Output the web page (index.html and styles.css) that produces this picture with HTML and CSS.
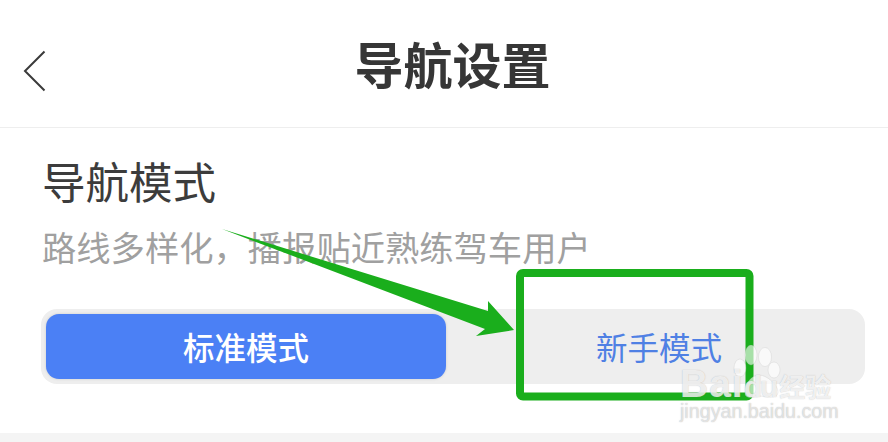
FILE: index.html
```html
<!DOCTYPE html>
<html lang="zh-CN">
<head>
<meta charset="utf-8">
<title>导航设置</title>
<link rel="stylesheet" href="styles.css">
</head>
<body>
<div class="page">
  <header class="topbar">
    <svg class="back" width="24" height="42" viewBox="0 0 24 42"><path d="M21.5 1.5 2 21 21.5 40.500" fill="none" stroke="#3a3a3a" stroke-width="2"/></svg>
    <h1 class="title">导航设置</h1>
  </header>
  <section class="mode">
    <h2 class="mode-title">导航模式</h2>
    <p class="mode-desc">路线多样化，播报贴近熟练驾车用户</p>
    <div class="segment">
      <div class="seg-item seg-active">标准模式</div>
      <div class="seg-item seg-idle">新手模式</div>
    </div>
  </section>
  <div class="band"></div>

  <svg class="annotation" width="888" height="442" viewBox="0 0 888 442">
    <polygon points="222,229 488,311 488,301 514,330 476,336 485,329" fill="#1aae1c"/>
    <rect x="520" y="273" width="229.500" height="123.500" rx="3" fill="none" stroke="#1aae1c" stroke-width="8"/>
  </svg>

  <div class="watermark">
    <svg class="paw" width="56" height="60" viewBox="0 0 56 60">
      <g fill="#fff" fill-opacity=".62" stroke="#bbb" stroke-opacity=".35" stroke-width=".7">
        <ellipse cx="8" cy="23" rx="6" ry="9"/>
        <ellipse cx="19" cy="10" rx="6" ry="10"/>
        <ellipse cx="33" cy="12" rx="6.500" ry="9.500"/>
        <ellipse cx="42" cy="25" rx="6" ry="8"/>
        <path d="M13 48C13 38 20 30 27 30C35 30 46 40 46 47C46 53 38 53 29 51C21 53 13 54 13 48Z"/>
      </g>
    </svg>
    <div class="wm-brand"><span class="wm-bai">Bai</span><span class="wm-du">du</span><span class="wm-jy">经验</span></div>
    <div class="wm-url">jingyan.baidu.com</div>
  </div>
</div>
</body>
</html>
```
FILE: styles.css
```css
* { box-sizing: border-box; }
html, body { margin: 0; padding: 0; background: #fff; }
body { font-family: "Noto Sans CJK SC", "Noto Sans", sans-serif; }
.page { position: relative; width: 888px; height: 442px; overflow: hidden; display: flex; flex-direction: column; background: #fff; }
.topbar { height: 128px; flex: none; display: flex; align-items: center; justify-content: center; position: relative; border-bottom: 1px solid #eeeeee; padding: 0 0 2px 17px; }
.back { position: absolute; left: 23px; top: 50px; }
.title { margin: 0; font-size: 49px; line-height: 60px; font-weight: 700; color: #363636; }
.mode { flex: 1; padding: 23px 23px 0 41px; }
.mode-title { margin: 0 0 0 1px; font-size: 43.500px; line-height: 60px; font-weight: 400; color: #3c3c3c; }
.mode-desc { margin: 10px 0 0 1px; font-size: 34.300px; line-height: 50px; color: #a0a0a0; white-space: nowrap; }
.segment { margin-top: 38px; height: 75px; padding: 5px; border-radius: 16px; background: #eeeeee; display: flex; }
.seg-item { display: flex; align-items: center; justify-content: center; font-size: 31.500px; padding-bottom: 2px; }
.seg-active { width: 400px; background: #4b80f5; color: #fff; border-radius: 13px; font-weight: 500; box-shadow: 0 0 3px rgba(0,0,0,.14); }
.seg-idle { flex: 1; color: #4f80e4; padding-left: 12px; }
.band { height: 9px; flex: none; background: #f4f4f4; }
.annotation { position: absolute; left: 0; top: 0; }
.watermark { position: absolute; left: 680px; top: 345px; width: 170px; height: 80px; color: #fff; }
.paw { position: absolute; left: 52px; top: 0; }
.wm-brand { position: absolute; left: 0; top: 23px; display: flex; align-items: baseline; white-space: nowrap; line-height: 31px; }
.wm-bai, .wm-du { font-family: "Liberation Sans", sans-serif; font-weight: 700; color: rgba(255,255,255,.75); text-shadow: 0 0 1px rgba(120,120,120,.5); }
.wm-bai { font-size: 39px; letter-spacing: 1px; }
.wm-du { font-size: 30px; letter-spacing: -2px; }
.wm-jy { margin-left: 3px; font-size: 26px; font-weight: 700; color: rgba(255,255,255,.8); text-shadow: 0 0 1px rgba(120,120,120,.5); }
.wm-url { position: absolute; left: 0; top: 56px; font-family: "Liberation Sans", sans-serif; font-size: 19.700px; line-height: 20px; color: rgba(255,255,255,.6); text-shadow: 0 0 1px rgba(110,110,110,.55); white-space: nowrap; }
```
